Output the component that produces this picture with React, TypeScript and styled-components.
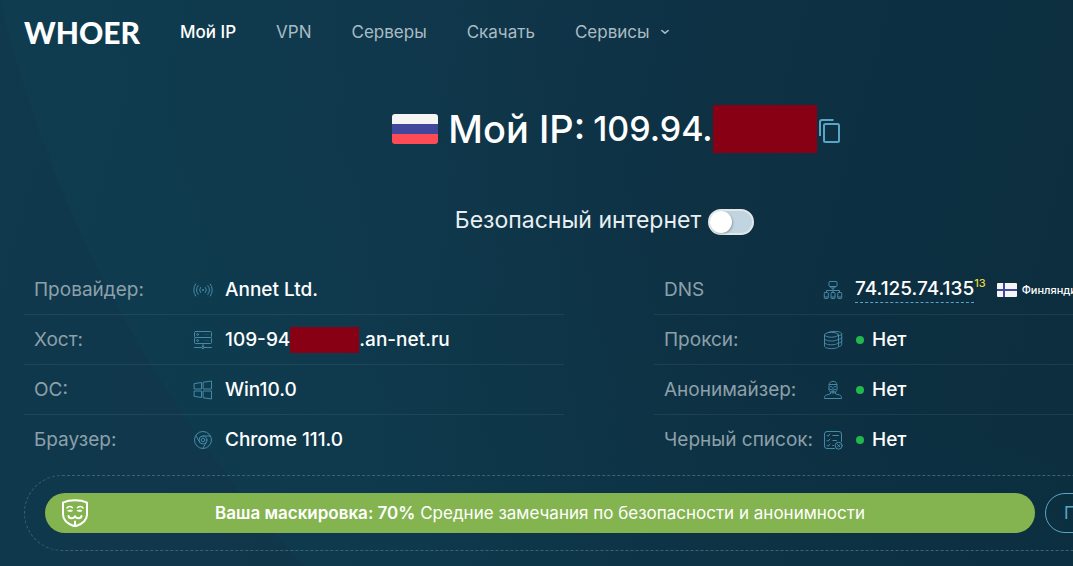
import React, { ReactNode, useState } from "react";
import styled, { createGlobalStyle } from "styled-components";

const GlobalStyle = createGlobalStyle`
  * { box-sizing: border-box; }
  html, body { margin: 0; min-height: 100%; background: #0d3042; }
  body {
    font-family: Inter, "Liberation Sans", sans-serif;
    color: #fff;
    overflow-x: hidden;
  }
`;

const Page = styled.div`
  min-height: 100vh;
  overflow: hidden;
  padding: 0 24px 15px;
  background:
    radial-gradient(circle 1262px at 1227px -294px, rgba(12, 68, 86, 0) 60%, rgba(12, 68, 86, 0.28) 92%, rgba(12, 68, 86, 0.28) 99.9%, rgba(12, 68, 86, 0) 100%),
    linear-gradient(105deg, #10394d 0%, #10364a 35%, #0d3042 68%, #0c2e3f 100%);
`;

const Container = styled.div`
  min-width: 1170px;
  max-width: 1170px;
`;

const Header = styled.header`
  display: flex;
  align-items: center;
  height: 64px;
`;

const Logo = styled.a`
  width: 116px;
  margin-right: 40px;
  font-family: Lato, Inter, sans-serif;
  font-size: 30px;
  font-weight: 900;
  line-height: 36px;
  color: #fff;
  text-decoration: none;
`;

const Nav = styled.nav`
  display: flex;
  align-items: center;
  gap: 40px;
`;

const NavLink = styled.a<{ $active?: boolean }>`
  display: flex;
  align-items: center;
  gap: 10px;
  font-size: 17px;
  line-height: 24px;
  color: ${(p) => (p.$active ? "#fff" : "#a9bcc4")};
  font-weight: ${(p) => (p.$active ? 500 : 400)};
  text-decoration: none;
  white-space: nowrap;
`;

const Title = styled.h1`
  display: flex;
  align-items: center;
  justify-content: center;
  height: 48px;
  margin: 41px 0 0;
  padding-left: 14px;
  font-size: 38px;
  font-weight: 500;
  line-height: 48px;
  white-space: nowrap;
`;

const TitleText = styled.span`
  margin: 0 8px 0 10px;
`;

const Address = styled.span`
  font-size: 34px;
`;

const Redacted = styled.span<{ $w: number; $h: number }>`
  display: block;
  flex: none;
  width: ${(p) => p.$w}px;
  height: ${(p) => p.$h}px;
  background: #870014;
`;

const CopyButton = styled.button`
  display: flex;
  margin-left: 2px;
  padding: 4px 0 0;
  border: 0;
  background: none;
  color: #5aa5c6;
  cursor: pointer;
`;

const SafeRow = styled.label`
  display: flex;
  align-items: center;
  justify-content: center;
  gap: 7px;
  height: 30px;
  margin: 52px 9px 0 0;
  font-size: 23px;
  line-height: 30px;
  color: #e9eff2;
`;

const Switch = styled.input`
  appearance: none;
  flex: none;
  display: flex;
  width: 46px;
  height: 26px;
  margin: 4px 0 0;
  border: 2px solid #e4e7e9;
  border-radius: 13px;
  background: #c0d5df;
  cursor: pointer;
  &::before {
    content: "";
    width: 22px;
    height: 22px;
    border-radius: 50%;
    background: #fff;
    box-shadow: 1px 1px 2px rgba(0, 0, 0, 0.25);
  }
  &:checked {
    justify-content: flex-end;
    background: #84b44f;
  }
`;

const Columns = styled.div`
  display: grid;
  grid-template-columns: 1fr 1fr;
  gap: 90px;
  margin-top: 30px;
`;

const List = styled.dl`
  margin: 0;
`;

const Row = styled.div`
  display: grid;
  grid-template-columns: 159px 1fr;
  align-items: center;
  height: 50px;
  padding-left: 10px;
  border-bottom: 1px solid rgba(255, 255, 255, 0.07);
  &:last-child { border-bottom-color: transparent; }
`;

const Label = styled.dt`
  font-size: 19px;
  line-height: 26px;
  color: #8da0aa;
  white-space: nowrap;
`;

const Value = styled.dd`
  display: flex;
  align-items: center;
  margin: 0;
  font-size: 19px;
  font-weight: 500;
  line-height: 26px;
  white-space: nowrap;
`;

const IconSvg = styled.svg`
  flex: none;
  width: 20px;
  height: 20px;
  margin-right: 12px;
  fill: none;
  stroke: #4689a6;
  stroke-linecap: round;
  stroke-linejoin: round;
`;

const Dot = styled.span`
  width: 8px;
  height: 8px;
  margin: 0 8px 0 1px;
  border-radius: 50%;
  background: #22b84e;
`;

const DnsLink = styled.a`
  border-bottom: 1px dashed #5aa5c6;
  color: #fff;
  text-decoration: none;
`;

const Count = styled.sup`
  align-self: flex-start;
  margin-right: 11px;
  font-size: 11px;
  line-height: 14px;
  color: #e3d73c;
`;

const Country = styled.span`
  margin-left: 5px;
  font-size: 11px;
  line-height: 16px;
`;

const Summary = styled.section`
  display: grid;
  grid-template-columns: 990px 1fr;
  gap: 10px;
  margin-top: 10px;
  padding: 17px 20px;
  border: 1px dashed #3d6274;
  border-radius: 38px;
`;

const Bar = styled.div`
  display: grid;
  grid-template-columns: 28px 1fr 28px;
  align-items: center;
  height: 40px;
  padding: 0 16px;
  border-radius: 20px;
  background: #84b44f;
  font-size: 17px;
  line-height: 24px;
  text-align: center;
  white-space: nowrap;
`;

const Strong = styled.strong`
  font-weight: 600;
`;

const MoreButton = styled.button`
  height: 40px;
  padding: 0 18px;
  border: 1px solid #5aa5c6;
  border-radius: 20px;
  background: none;
  color: #5aa5c6;
  font: inherit;
  font-size: 17px;
  text-align: left;
  cursor: pointer;
`;

const Icon = ({ children }: { children: ReactNode }) => (
  <IconSvg viewBox="0 0 20 20" aria-hidden="true">{children}</IconSvg>
);

const SignalIcon = () => (
  <Icon>
    <circle cx="10" cy="10" r="1" fill="#4689a6" stroke="none" />
    <path d="M7.6 7.4a4 4 0 0 0 0 5.2M12.4 7.4a4 4 0 0 1 0 5.2M5.2 5.6a7 7 0 0 0 0 8.8M14.8 5.6a7 7 0 0 1 0 8.8M2.7 4a10 10 0 0 0 0 12M17.3 4a10 10 0 0 1 0 12" />
  </Icon>
);

const ServerIcon = () => (
  <Icon>
    <rect x="1.5" y="1.5" width="17" height="6" rx="1" />
    <rect x="1.5" y="7.5" width="17" height="6" rx="1" />
    <circle cx="4.6" cy="4.5" r="0.9" />
    <circle cx="4.6" cy="10.5" r="0.9" />
    <path d="M11.5 4.5h4.5M11.5 10.5h4.5" strokeOpacity="0.45" strokeDasharray="1 1" strokeLinecap="butt" />
    <path d="M10 13.5v3M1.5 17.5h7M11.5 17.5h7" />
    <circle cx="10" cy="17.5" r="1.2" />
  </Icon>
);

const WindowsIcon = () => (
  <Icon>
    <path d="M1.5 3.6 8.5 2.5V9h-7zM10.5 2.2 18.5 1v8h-8zM1.5 11h7v6.5l-7-1.1zM10.5 11h8v8l-8-1.2z" />
  </Icon>
);

const ChromeIcon = () => (
  <Icon>
    <circle cx="10" cy="10" r="8.5" />
    <circle cx="10" cy="10" r="4" />
    <circle cx="10" cy="10" r="1.8" />
    <path d="M10 6h7.5M6.5 12 2.8 5.6M13.5 12 9.8 18.4" />
  </Icon>
);

const NetworkIcon = () => (
  <Icon>
    <rect x="6" y="1.5" width="8" height="5" rx="1" />
    <path d="M7.5 6.5h5l-1 1.5h-3zM10 8v4.5M3.5 12.5v-2h13v2" />
    <rect x="1.3" y="12.5" width="4" height="6" rx="0.8" />
    <rect x="8" y="12.5" width="4" height="6" rx="0.8" />
    <rect x="14.7" y="12.5" width="4" height="6" rx="0.8" />
    <path d="M1.8 17h3M8.5 17h3M15.2 17h3" />
  </Icon>
);

const DatabaseIcon = () => (
  <Icon>
    <ellipse cx="8.5" cy="4.8" rx="7" ry="2.4" />
    <path d="M1.5 4.8v11.4c0 1.4 3.2 2.4 7 2.4s7-1 7-2.4V4.8M1.5 8.6c0 1.4 3.2 2.4 7 2.4s7-1 7-2.4M1.5 12.4c0 1.4 3.2 2.4 7 2.4s7-1 7-2.4" />
    <path d="M5 2.6c1.4-.8 3.4-1.2 6-1.2 4.5 0 7.7 1 7.7 2.4v10.8c0 .9-1.2 1.7-3.2 2.1M18.7 7.4c0 .9-1.2 1.7-3.2 2.1M18.7 11c0 .9-1.2 1.7-3.2 2.1M18.7 3.8c0 .9-1.2 1.7-3.2 2.1" />
  </Icon>
);

const AnonymousIcon = () => (
  <Icon>
    <path d="M6 9V5.5C6 2.8 7.6 1.3 10 1.3s4 1.5 4 4.2V9c0 2.2-1.7 4-4 4s-4-1.8-4-4z" />
    <path d="M6.2 4.5h7.6M7.5 6.5l1.7.6M12.5 6.5l-1.7.6M7.5 9.6c1 0 1.8-.2 2.5-.9.7.7 1.5.9 2.5.9M10 10.2V13M8.3 11.3h3.4" />
    <path d="M7.5 12.5v1.3l-4 1.2c-1.3.4-2 1.4-2 2.7v.8h17v-.8c0-1.3-.7-2.3-2-2.7l-4-1.2v-1.3" />
  </Icon>
);

const ChecklistIcon = () => (
  <Icon>
    <path d="M18.5 11.5V4A2.5 2.5 0 0 0 16 1.5H4A2.5 2.5 0 0 0 1.5 4v12A2.5 2.5 0 0 0 4 18.5h7.5" />
    <path d="m4 5.3 1 1 2-2.3M4 10.3l1 1L7 9M4 15.3l1 1L7 14M9.8 5.5h5.7M9.8 10.5h3.7M9.8 15.5h1" />
    <circle cx="15.7" cy="15.7" r="3.5" />
    <path d="m14.4 14.4 2.6 2.6M17 14.4 14.4 17" />
  </Icon>
);

const MaskIcon = () => (
  <svg width="28" height="28" viewBox="0 0 28 28" fill="none" stroke="#fff" strokeLinecap="round" strokeLinejoin="round" aria-hidden="true">
    <path d="M2 3.6C6 1.7 10 1.3 14 1.3s8 .4 12 2.3v11.9c0 5.5-5.5 9.8-12 12-6.5-2.2-12-6.5-12-12z" strokeWidth="2" />
    <path d="M6 9c1.2-1.6 3.6-1.7 5.5-.4M22 9c-1.2-1.6-3.6-1.7-5.5-.4" strokeWidth="1.5" />
    <path d="M7 11.8c1.5-1 3-1 4.5 0-1.5 1-3 1-4.5 0zM16.5 11.8c1.5-1 3-1 4.5 0-1.5 1-3 1-4.5 0z" fill="#fff" strokeWidth="0.8" />
    <path d="M7.5 17c.5 2.6 4.8 3.2 6.5.2 1.7 3 6 2.4 6.5-.2M14 22.5v4" strokeWidth="2" />
  </svg>
);

const CopyIcon = () => (
  <svg width="21" height="24" viewBox="0 0 21 24" fill="none" stroke="currentColor" strokeWidth="2" aria-hidden="true">
    <path d="M1 17V3a2 2 0 0 1 2-2h11.5" />
    <rect x="5" y="5" width="15" height="18" rx="1.5" />
  </svg>
);

const RussiaFlag = () => (
  <svg width="46" height="30" viewBox="0 0 46 30" role="img" aria-label="Россия">
    <path d="M0 10V3a3 3 0 0 1 3-3h40a3 3 0 0 1 3 3v7z" fill="#f5f5f5" />
    <path d="M0 10h46v10H0z" fill="#41479b" />
    <path d="M0 20h46v7a3 3 0 0 1-3 3H3a3 3 0 0 1-3-3z" fill="#ff4b55" />
  </svg>
);

const FinlandFlag = () => (
  <svg width="20" height="14" viewBox="0 0 20 14" role="img" aria-label="Флаг Финляндии">
    <rect width="20" height="14" rx="1" fill="#f5f5f5" />
    <path d="M6 0h2v14H6zM0 6h20v2H0z" fill="#41479b" />
  </svg>
);

const Chevron = () => (
  <svg width="10" height="6" viewBox="0 0 10 6" fill="none" stroke="currentColor" strokeWidth="1.6" strokeLinecap="round" strokeLinejoin="round" aria-hidden="true">
    <path d="M1.8 1.5 5 4.2l3.2-2.7" />
  </svg>
);

const InfoRow = ({ label, icon, children }: { label: string; icon: ReactNode; children: ReactNode }) => (
  <Row>
    <Label>{label}</Label>
    <Value>{icon}{children}</Value>
  </Row>
);

export default function App() {
  const [safe, setSafe] = useState(false);
  return (
    <>
      <GlobalStyle />
      <Page>
        <Container>
          <Header>
            <Logo href="#">WHOER</Logo>
            <Nav>
              <NavLink href="#" $active>Мой IP</NavLink>
              <NavLink href="#">VPN</NavLink>
              <NavLink href="#">Серверы</NavLink>
              <NavLink href="#">Скачать</NavLink>
              <NavLink href="#">Сервисы<Chevron /></NavLink>
            </Nav>
          </Header>
          <main>
            <Title>
              <RussiaFlag />
              <TitleText>Мой IP:</TitleText>
              <Address>109.94.</Address>
              <Redacted $w={104} $h={48} />
              <CopyButton type="button" aria-label="Скопировать"><CopyIcon /></CopyButton>
            </Title>
            <SafeRow>
              Безопасный интернет
              <Switch type="checkbox" role="switch" checked={safe} onChange={(e) => setSafe(e.target.checked)} />
            </SafeRow>
            <Columns>
              <List>
                <InfoRow label="Провайдер:" icon={<SignalIcon />}>Annet Ltd.</InfoRow>
                <InfoRow label="Хост:" icon={<ServerIcon />}>
                  109-94<Redacted $w={69} $h={26} />.an-net.ru
                </InfoRow>
                <InfoRow label="ОС:" icon={<WindowsIcon />}>Win10.0</InfoRow>
                <InfoRow label="Браузер:" icon={<ChromeIcon />}>Chrome 111.0</InfoRow>
              </List>
              <List>
                <InfoRow label="DNS" icon={<NetworkIcon />}>
                  <DnsLink href="#">74.125.74.135</DnsLink>
                  <Count>13</Count>
                  <FinlandFlag />
                  <Country>Финляндия</Country>
                </InfoRow>
                <InfoRow label="Прокси:" icon={<DatabaseIcon />}><Dot />Нет</InfoRow>
                <InfoRow label="Анонимайзер:" icon={<AnonymousIcon />}><Dot />Нет</InfoRow>
                <InfoRow label="Черный список:" icon={<ChecklistIcon />}><Dot />Нет</InfoRow>
              </List>
            </Columns>
            <Summary>
              <Bar>
                <MaskIcon />
                <span><Strong>Ваша маскировка: 70%</Strong> Средние замечания по безопасности и анонимности</span>
              </Bar>
              <MoreButton type="button">Подробнее</MoreButton>
            </Summary>
          </main>
        </Container>
      </Page>
    </>
  );
}
